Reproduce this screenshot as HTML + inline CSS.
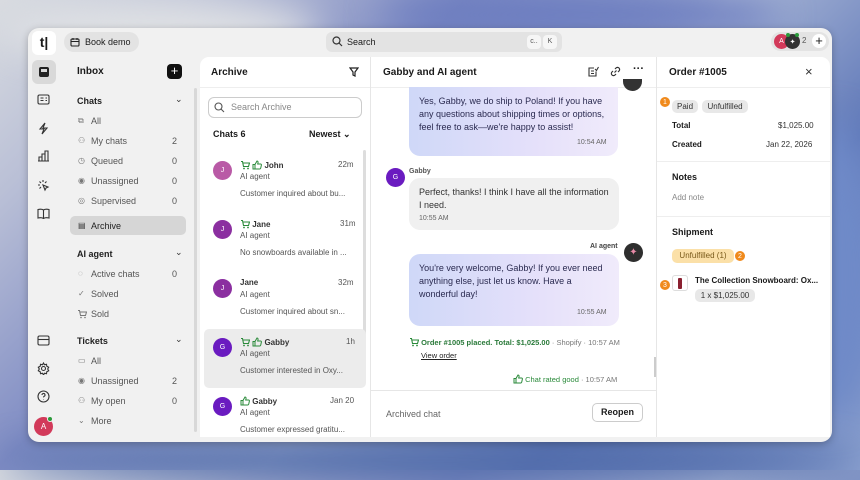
<!DOCTYPE html>
<html><head><meta charset="utf-8"><style>
*{box-sizing:border-box;margin:0;padding:0}
body{width:860px;height:470px;overflow:hidden;font-family:"Liberation Sans",sans-serif;color:#1a1a1a;position:relative;
background:linear-gradient(135deg,#d8dbe0 0%,#b9bfd6 15%,#7f8cc4 35%,#a9b6d6 55%,#5f78b8 75%,#8aa0cf 100%);}
.blob{position:absolute;border-radius:50%;filter:blur(18px)}
.win{position:absolute;left:28px;top:28px;width:804px;height:414px;background:#f1f1f1;border-radius:11px;overflow:hidden;box-shadow:0 2px 8px rgba(0,0,0,.25)}
.abs{position:absolute}
.t{position:absolute;white-space:nowrap}
.nav .t{font-size:9px;color:#555}
.cnt{font-size:9px;color:#555}
.white{position:absolute;left:172px;top:29px;width:630px;height:380px;background:#fff;border-radius:9px 9px 0 0}
.hdr{font-size:11px;font-weight:bold}
.av{position:absolute;width:19px;height:19px;border-radius:50%;color:#fff;font-size:7px;display:flex;align-items:center;justify-content:center}
.sm{font-size:8px;color:#555}
.bub{position:absolute;border-radius:11px;font-size:9px;line-height:13px;padding:8px 10px;color:#2a2a50}
.tag{display:inline-block;background:#e8e8e8;border-radius:5px;padding:2px 5px;font-size:8px;color:#333}
.num{position:absolute;width:10px;height:10px;border-radius:50%;background:#f08a1c;color:#fff;font-size:7px;display:flex;align-items:center;justify-content:center}
svg{position:absolute}
svg.i{position:relative;display:inline-block;vertical-align:-2px}
</style></head><body>
<div class="blob" style="left:0;top:0;width:320px;height:60px;background:#dfe1e4"></div>
<div class="blob" style="left:380px;top:-10px;width:400px;height:50px;background:#6a7bbf"></div>
<div class="blob" style="left:780px;top:120px;width:100px;height:300px;background:#6f8ac8"></div>
<div class="blob" style="left:0;top:440px;width:860px;height:40px;background:#4f6aa8"></div>
<svg width="0" height="0" style="position:absolute">
 <defs>
  <symbol id="cart" viewBox="0 0 10 10"><path d="M1 1.5h1.5l1 5h5l1-3.5H3" fill="none" stroke="#2a8a3a" stroke-width="1.1"/><circle cx="4" cy="8.5" r=".9" fill="#2a8a3a"/><circle cx="8" cy="8.5" r=".9" fill="#2a8a3a"/></symbol>
  <symbol id="thumb" viewBox="0 0 10 10"><path d="M1 4.5h2v4.5H1zM3 4.5L5 1c1 0 1.2.8 1 1.8L5.7 4H8.5c.6 0 1 .5.9 1l-.7 3.2c-.1.5-.5.8-1 .8H3" fill="none" stroke="#2a8a3a" stroke-width="1"/></symbol>
 </defs>
</svg>
<div class="win">
 <div class="abs" style="left:4px;top:3px;width:24px;height:24px;background:#fff;border-radius:6px;font-weight:bold;font-size:14px;text-align:center;line-height:23px">t|</div>
 <div class="abs" style="left:36px;top:4px;width:75px;height:20px;background:#e3e3e3;border-radius:10px;font-size:9px;line-height:20px;padding-left:21px">Book demo</div>
 <svg style="left:42px;top:9px" width="10" height="10" viewBox="0 0 10 10" fill="none" stroke="#222" stroke-width="1.1"><rect x="1" y="2" width="8" height="7" rx="1"/><path d="M3 1v2M7 1v2M1 4.5h8"/></svg>
 <div class="abs" style="left:298px;top:4px;width:236px;height:20px;background:#e3e3e3;border-radius:6px;font-size:9px;line-height:20px;padding-left:21px">Search</div>
 <svg style="left:304px;top:8px" width="11" height="11" viewBox="0 0 11 11" fill="none" stroke="#333" stroke-width="1.2"><circle cx="4.5" cy="4.5" r="3.5"/><path d="M7 7l3 3"/></svg>
 <div class="abs" style="left:499px;top:7px;width:14px;height:14px;background:#f6f6f6;border-radius:4px;font-size:7px;text-align:center;line-height:14px;color:#555">c..</div>
 <div class="abs" style="left:515px;top:7px;width:14px;height:14px;background:#f6f6f6;border-radius:4px;font-size:7px;text-align:center;line-height:14px;color:#555">K</div>
 <div class="abs" style="left:743px;top:4px;width:58px;height:19px;background:#e3e3e3;border-radius:10px"></div>
 <div class="av" style="left:746px;top:6px;width:15px;height:15px;background:#d23a5a;font-size:7px">A</div>
 <div class="av" style="left:757px;top:6px;width:15px;height:15px;background:#333;font-size:7px">✦</div>
 <div class="abs" style="left:758px;top:5px;width:4px;height:4px;border-radius:50%;background:#2a9a3a"></div>
 <div class="abs" style="left:767px;top:5px;width:4px;height:4px;border-radius:50%;background:#2a9a3a"></div>
 <div class="t" style="left:774px;top:8px;font-size:8px;color:#555">2</div>
 <div class="abs" style="left:784px;top:6px;width:14px;height:14px;background:#fff;border-radius:50%;text-align:center;line-height:13px;font-size:13px">+</div>

 <div class="abs" style="left:4px;top:32px;width:24px;height:24px;background:#d9d9d9;border-radius:6px"></div>
 <svg style="left:10px;top:38px" width="12" height="12" viewBox="0 0 12 12"><rect x="1" y="1" width="10" height="10" rx="2" fill="#222"/><rect x="3" y="3" width="6" height="3" fill="#d9d9d9"/></svg>
 <svg style="left:9px;top:66px" width="13" height="11" viewBox="0 0 13 11" fill="none" stroke="#333" stroke-width="1.1"><rect x="1" y="1" width="11" height="9" rx="1.5"/><path d="M3.5 4h3M3.5 6.5h3M8.5 4h1.5M8.5 6.5h1.5"/></svg>
 <svg style="left:10px;top:94px" width="11" height="13" viewBox="0 0 11 13" fill="none" stroke="#333" stroke-width="1.1"><path d="M7 1L2 7h4l-2 5 5-6H5z"/></svg>
 <svg style="left:9px;top:122px" width="13" height="12" viewBox="0 0 13 12" fill="none" stroke="#333" stroke-width="1.1"><path d="M1 11h11M2 11V7h3v4M5 11V4h3v7M8 11V1h3v10"/></svg>
 <svg style="left:9px;top:151px" width="13" height="13" viewBox="0 0 13 13" fill="none" stroke="#333" stroke-width="1.1"><path d="M6 6l5 2-2 1-1 2zM6 1v2M1 6h2M2.5 2.5l1.5 1.5M9.5 2.5L8 4M2.5 9.5L4 8"/></svg>
 <svg style="left:9px;top:180px" width="13" height="11" viewBox="0 0 13 11" fill="none" stroke="#333" stroke-width="1.1"><path d="M6.5 2C5 1 3 1 1 1.5V10c2-.5 4-.5 5.5.5 1.5-1 3.5-1 5.5-.5V1.5C10 1 8 1 6.5 2zM6.5 2v8.5"/></svg>
 <svg style="left:9px;top:307px" width="13" height="11" viewBox="0 0 13 11" fill="none" stroke="#333" stroke-width="1.1"><rect x="1" y="1" width="11" height="9" rx="1.5"/><path d="M1 4.5h11"/></svg>
 <svg style="left:9px;top:334px" width="13" height="13" viewBox="0 0 13 13" fill="none" stroke="#333" stroke-width="1.1"><circle cx="6.5" cy="6.5" r="2"/><path d="M6.5 1l1 1.8 2-.5.3 2 1.9.9-1 1.8 1 1.8-1.9.9-.3 2-2-.5-1 1.8-1-1.8-2 .5-.3-2-1.9-.9 1-1.8-1-1.8 1.9-.9.3-2 2 .5z"/></svg>
 <svg style="left:9px;top:362px" width="13" height="13" viewBox="0 0 13 13" fill="none" stroke="#333" stroke-width="1.1"><circle cx="6.5" cy="6.5" r="5.5"/><path d="M5 5a1.5 1.5 0 1 1 2 1.4c-.4.2-.5.5-.5 1M6.5 9.3v.3"/></svg>
 <div class="av" style="left:6px;top:389px;background:#d23a5a;font-size:8px">A</div>
 <div class="abs" style="left:19px;top:388px;width:6px;height:6px;border-radius:50%;background:#2a9a3a;border:1px solid #f1f1f1"></div>

 <div class="t hdr" style="left:49px;top:38px;font-size:10px">Inbox</div>
 <div class="abs" style="left:139px;top:36px;width:15px;height:15px;background:#111;border-radius:4px;color:#fff;text-align:center;line-height:14px;font-size:13px">+</div>
 <div class="abs" style="left:166px;top:60px;width:3px;height:344px;background:#d8d8d8;border-radius:2px"></div>
 <div class="nav">
 <div class="t" style="left:49px;top:68px;font-size:9px;font-weight:bold;color:#222">Chats</div><div class="t" style="left:147px;top:66px;font-size:9px;color:#333">⌄</div>
 <div class="t" style="left:63px;top:88px">All</div>
 <div class="t" style="left:63px;top:108px">My chats</div><div class="t cnt" style="left:144px;top:108px">2</div>
 <div class="t" style="left:63px;top:128px">Queued</div><div class="t cnt" style="left:144px;top:128px">0</div>
 <div class="t" style="left:63px;top:148px">Unassigned</div><div class="t cnt" style="left:144px;top:148px">0</div>
 <div class="t" style="left:63px;top:168px">Supervised</div><div class="t cnt" style="left:144px;top:168px">0</div>
 <div class="abs" style="left:42px;top:188px;width:116px;height:19px;background:#d6d6d6;border-radius:5px"></div>
 <div class="t" style="left:63px;top:193px;color:#222">Archive</div>
 <div class="t" style="left:49px;top:221px;font-size:9px;font-weight:bold;color:#222">AI agent</div><div class="t" style="left:147px;top:219px;font-size:9px;color:#333">⌄</div>
 <div class="t" style="left:63px;top:241px">Active chats</div><div class="t cnt" style="left:144px;top:241px">0</div>
 <div class="t" style="left:63px;top:261px">Solved</div>
 <div class="t" style="left:63px;top:281px">Sold</div>
 <div class="t" style="left:49px;top:308px;font-size:9px;font-weight:bold;color:#222">Tickets</div><div class="t" style="left:147px;top:306px;font-size:9px;color:#333">⌄</div>
 <div class="t" style="left:63px;top:328px">All</div>
 <div class="t" style="left:63px;top:348px">Unassigned</div><div class="t cnt" style="left:144px;top:348px">2</div>
 <div class="t" style="left:63px;top:368px">My open</div><div class="t cnt" style="left:144px;top:368px">0</div>
 <div class="t" style="left:63px;top:388px">More</div>
 </div>
 <div style="position:absolute;left:50px;color:#777;font-size:8px">
  <div class="t" style="left:0;top:88px">⧉</div><div class="t" style="left:0;top:108px">⚇</div><div class="t" style="left:0;top:128px">◷</div><div class="t" style="left:0;top:148px">◉</div><div class="t" style="left:0;top:168px">◎</div><div class="t" style="left:0;top:193px;color:#333">▤</div>
  <div class="t" style="left:0;top:241px">◌</div><div class="t" style="left:0;top:261px">✓</div>
  <div class="t" style="left:0;top:328px">▭</div><div class="t" style="left:0;top:348px">◉</div><div class="t" style="left:0;top:368px">⚇</div><div class="t" style="left:0;top:388px">⌄</div>
 </div>
 <svg style="left:49px;top:281px" width="10" height="10" viewBox="0 0 10 10"><path d="M1 1.5h1.5l1 5h5l1-3.5H3" fill="none" stroke="#777" stroke-width="1"/><circle cx="4" cy="8.5" r=".8" fill="#777"/><circle cx="8" cy="8.5" r=".8" fill="#777"/></svg>

 <div class="white">
  <div class="t hdr" style="left:11px;top:10px;font-size:10px">Archive</div>
  <svg style="left:149px;top:10px" width="10" height="10" viewBox="0 0 10 10" fill="none" stroke="#222" stroke-width="1.2"><path d="M1 1h8L6 5v4L4 8V5z"/></svg>
  <div class="abs" style="left:0;top:30px;width:170px;height:1px;background:#eee"></div>
  <div class="abs" style="left:8px;top:40px;width:154px;height:21px;border:1px solid #ccc;border-radius:6px;font-size:9px;color:#888;line-height:19px;padding-left:22px">Search Archive</div>
  <svg style="left:14px;top:45px" width="11" height="11" viewBox="0 0 11 11" fill="none" stroke="#555" stroke-width="1.1"><circle cx="4.5" cy="4.5" r="3.5"/><path d="M7 7l3 3"/></svg>
  <div class="t" style="left:13px;top:72px;font-size:9px;font-weight:bold">Chats 6</div>
  <div class="t" style="left:109px;top:72px;font-size:9px;font-weight:bold">Newest ⌄</div>
  <div class="abs" style="left:163px;top:93px;width:3px;height:230px;background:#ddd;border-radius:2px"></div>
  <div class="abs" style="left:4px;top:272px;width:162px;height:59px;background:#ececec;border-radius:5px"></div>
  <div class="av" style="left:13px;top:104px;background:#b95aa6">J</div>
  <div class="t" style="left:40px;top:103px;font-size:8px;font-weight:bold;color:#333"><svg class="i" width="10" height="10"><use href="#cart"/></svg> <svg class="i" width="10" height="10"><use href="#thumb"/></svg> John</div><div class="t sm" style="left:138px;top:103px">22m</div>
  <div class="t sm" style="left:40px;top:115px">AI agent</div><div class="t sm" style="left:40px;top:132px">Customer inquired about bu...</div>
  <div class="av" style="left:13px;top:163px;background:#8b2fa0">J</div>
  <div class="t" style="left:40px;top:162px;font-size:8px;font-weight:bold;color:#333"><svg class="i" width="10" height="10"><use href="#cart"/></svg> Jane</div><div class="t sm" style="left:140px;top:162px">31m</div>
  <div class="t sm" style="left:40px;top:174px">AI agent</div><div class="t sm" style="left:40px;top:191px">No snowboards available in ...</div>
  <div class="av" style="left:13px;top:222px;background:#8b2fa0">J</div>
  <div class="t" style="left:40px;top:221px;font-size:8px;font-weight:bold;color:#333">Jane</div><div class="t sm" style="left:138px;top:221px">32m</div>
  <div class="t sm" style="left:40px;top:233px">AI agent</div><div class="t sm" style="left:40px;top:250px">Customer inquired about sn...</div>
  <div class="av" style="left:13px;top:281px;background:#6a1bc0">G</div>
  <div class="t" style="left:40px;top:280px;font-size:8px;font-weight:bold;color:#333"><svg class="i" width="10" height="10"><use href="#cart"/></svg> <svg class="i" width="10" height="10"><use href="#thumb"/></svg> Gabby</div><div class="t sm" style="left:146px;top:280px">1h</div>
  <div class="t sm" style="left:40px;top:292px">AI agent</div><div class="t sm" style="left:40px;top:309px">Customer interested in Oxy...</div>
  <div class="av" style="left:13px;top:340px;background:#6a1bc0">G</div>
  <div class="t" style="left:40px;top:339px;font-size:8px;font-weight:bold;color:#333"><svg class="i" width="10" height="10"><use href="#thumb"/></svg> Gabby</div><div class="t sm" style="left:130px;top:339px">Jan 20</div>
  <div class="t sm" style="left:40px;top:351px">AI agent</div><div class="t sm" style="left:40px;top:368px">Customer expressed gratitu...</div>

  <div class="abs" style="left:170px;top:0;width:1px;height:380px;background:#e6e6e6"></div>
  <div class="abs" style="left:456px;top:0;width:1px;height:380px;background:#e6e6e6"></div>
  <div class="t hdr" style="left:183px;top:10px;font-size:10px">Gabby and AI agent</div>
  <svg style="left:388px;top:9px" width="11" height="11" viewBox="0 0 11 11" fill="none" stroke="#333" stroke-width="1.1"><path d="M8 5.5V10H1V2h5M3 5h3M3 7.5h3M7 3l1.5 1.5L10.5 1"/></svg>
  <svg style="left:410px;top:9px" width="11" height="11" viewBox="0 0 11 11" fill="none" stroke="#333" stroke-width="1.2"><path d="M4.5 6.5l2-2M5 3l1-1a2 2 0 0 1 3 3l-1 1M6 8l-1 1a2 2 0 0 1-3-3l1-1"/></svg>
  <div class="t" style="left:433px;top:6px;font-size:11px;font-weight:bold">···</div>
  <div class="abs" style="left:171px;top:30px;width:285px;height:1px;background:#eee"></div>
  <div class="abs" style="left:423px;top:22px;width:19px;height:12px;border-radius:0 0 10px 10px;background:#333"></div>
  <div class="bub" style="left:209px;top:30px;width:209px;height:69px;border-radius:0 0 11px 11px;background:linear-gradient(90deg,#cfd8f8,#e5e0fa 60%,#f0ebfb)">Yes, Gabby, we do ship to Poland! If you have any questions about shipping times or options, feel free to ask—we're happy to assist!</div>
  <div class="t" style="left:377px;top:82px;font-size:7px;color:#666">10:54 AM</div>
  <div class="av" style="left:186px;top:111px;background:#6a1bc0">G</div>
  <div class="t" style="left:209px;top:111px;font-size:7px;font-weight:bold;color:#555">Gabby</div>
  <div class="bub" style="left:209px;top:121px;width:210px;height:52px;background:#f0f0f0;color:#333">Perfect, thanks! I think I have all the information I need.</div>
  <div class="t" style="left:219px;top:158px;font-size:7px;color:#666">10:55 AM</div>
  <div class="t" style="left:390px;top:186px;font-size:7px;font-weight:bold;color:#444">AI agent</div>
  <div class="av" style="left:424px;top:186px;background:#2e2e2e;color:#e98aa8;font-size:10px">✦</div>
  <div class="bub" style="left:209px;top:197px;width:210px;height:72px;background:linear-gradient(90deg,#cfd8f8,#e5e0fa 60%,#f0ebfb)">You're very welcome, Gabby! If you ever need anything else, just let us know. Have a wonderful day!</div>
  <div class="t" style="left:377px;top:252px;font-size:7px;color:#666">10:55 AM</div>
  <div class="t" style="left:209px;top:280px;font-size:7.5px;color:#2a7a3a"><svg class="i" width="10" height="10"><use href="#cart"/></svg> <b>Order #1005 placed. Total: $1,025.00</b> <span style="color:#777">· Shopify · 10:57 AM</span></div>
  <div class="t" style="left:221px;top:294px;font-size:7.5px;text-decoration:underline;color:#222">View order</div>
  <div class="t" style="left:313px;top:317px;font-size:7.5px;color:#2a8a3a"><svg class="i" width="10" height="10"><use href="#thumb"/></svg> Chat rated good <span style="color:#777">· 10:57 AM</span></div>
  <div class="abs" style="left:454px;top:300px;width:2px;height:20px;background:#ccc"></div>
  <div class="abs" style="left:171px;top:333px;width:285px;height:1px;background:#e6e6e6"></div>
  <div class="t" style="left:186px;top:352px;font-size:9px;color:#666">Archived chat</div>
  <div class="abs" style="left:392px;top:346px;width:51px;height:19px;border:1px solid #ccc;border-radius:5px;font-size:9px;font-weight:bold;text-align:center;line-height:17px">Reopen</div>

  <div class="t hdr" style="left:469px;top:10px;font-size:10px">Order #1005</div>
  <div class="t" style="left:605px;top:7px;font-size:13px;color:#333">×</div>
  <div class="abs" style="left:457px;top:30px;width:173px;height:1px;background:#eee"></div>
  <div class="num" style="left:460px;top:40px">1</div>
  <div class="t" style="left:472px;top:39px"><span class="tag">Paid</span> <span class="tag">Unfulfilled</span></div>
  <div class="t" style="left:472px;top:64px;font-size:8px;font-weight:bold">Total</div><div class="t" style="left:578px;top:64px;font-size:8px;color:#333">$1,025.00</div>
  <div class="t" style="left:472px;top:83px;font-size:8px;font-weight:bold">Created</div><div class="t" style="left:566px;top:83px;font-size:8px;color:#333">Jan 22, 2026</div>
  <div class="abs" style="left:457px;top:104px;width:173px;height:1px;background:#eee"></div>
  <div class="t" style="left:472px;top:115px;font-size:9px;font-weight:bold">Notes</div>
  <div class="t" style="left:472px;top:136px;font-size:8px;color:#888">Add note</div>
  <div class="abs" style="left:457px;top:159px;width:173px;height:1px;background:#eee"></div>
  <div class="t" style="left:472px;top:170px;font-size:9px;font-weight:bold">Shipment</div>
  <div class="abs" style="left:472px;top:192px;width:62px;height:14px;background:#fbe0a8;border-radius:5px;font-size:8px;color:#7a5a1a;text-align:center;line-height:14px">Unfulfilled (1)</div>
  <div class="num" style="left:535px;top:194px">2</div>
  <div class="num" style="left:460px;top:223px">3</div>
  <div class="abs" style="left:472px;top:218px;width:16px;height:16px;border:1px solid #ddd;border-radius:3px;background:#fff"><div style="position:absolute;left:5px;top:2px;width:4px;height:11px;background:#8a2030;border-radius:1px"></div></div>
  <div class="t" style="left:495px;top:219px;font-size:8px;font-weight:bold">The Collection Snowboard: Ox...</div>
  <div class="abs" style="left:495px;top:232px;width:60px;height:13px;background:#e8e8e8;border-radius:5px;font-size:8px;text-align:center;line-height:13px;color:#333">1 x $1,025.00</div>
 </div>
</div>
</body></html>
